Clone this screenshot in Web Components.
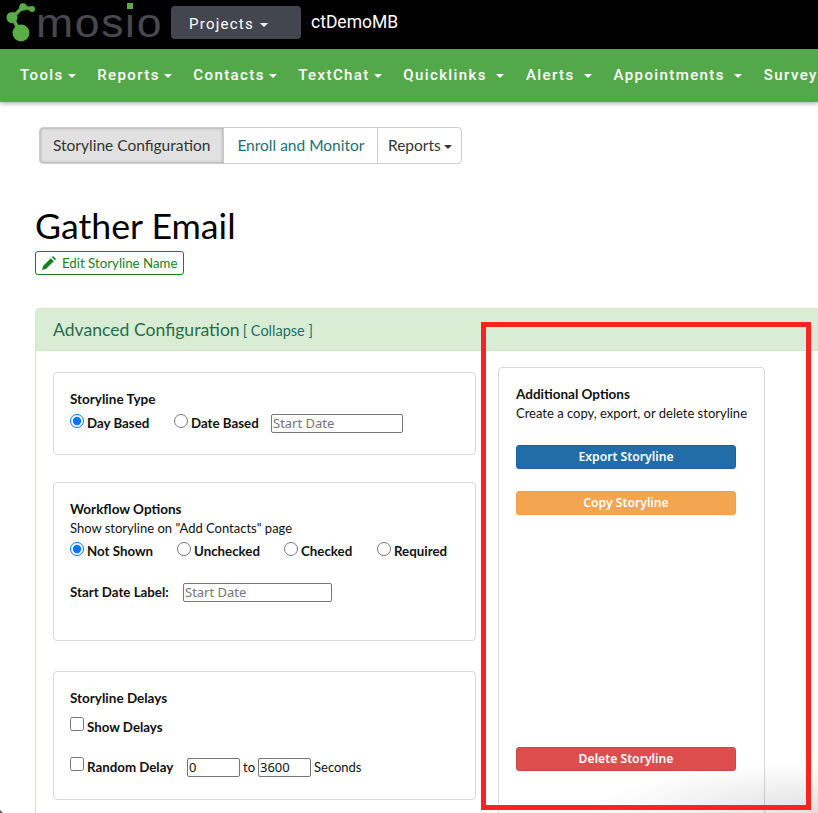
<!DOCTYPE html>
<html lang="en">
<head>
<meta charset="utf-8">
<title>Gather Email</title>
<style>
	html, body {
		margin: 0;
		height: 813px;
		overflow: hidden;
		background: #fff;
		color: #111;
		font-family: Lato, "Liberation Sans", sans-serif;
	}
	main-page { position: relative; }
	.left { display: flex; flex-direction: column; }
	.left option-card { padding-left: 16px; }
	.card-type { height: 83px; margin: 5px 0 27px; }
	.card-workflow { height: 159px; margin-bottom: 30px; }
	.card-delays { height: 129px; }
	.card-options { height: 460px; }
</style>
</head>
<body>
<main-page>
	<top-bar project="Projects" user="ctDemoMB"></top-bar>
	<nav-bar>
		<nav-item>Tools</nav-item>
		<nav-item>Reports</nav-item>
		<nav-item>Contacts</nav-item>
		<nav-item>TextChat</nav-item>
		<nav-item wide>Quicklinks</nav-item>
		<nav-item wide>Alerts</nav-item>
		<nav-item wide>Appointments</nav-item>
		<nav-item>Surveys</nav-item>
	</nav-bar>
	<tab-group></tab-group>
	<page-title name="Gather Email"></page-title>
	<config-panel>
		<div class="left" slot="left">
			<option-card class="card-type" heading="Storyline Type">
				<choice-row style="margin-top: 3px">
					<radio-choice name="type" width="104" checked>Day Based</radio-choice>
					<radio-choice name="type" width="97">Date Based</radio-choice>
					<text-field placeholder="Start Date" width="132"></text-field>
				</choice-row>
			</option-card>
			<option-card class="card-workflow" heading="Workflow Options" note='Show storyline on "Add Contacts" page'>
				<choice-row style="margin-top: 2px">
					<radio-choice name="flow" width="107" checked>Not Shown</radio-choice>
					<radio-choice name="flow" width="107">Unchecked</radio-choice>
					<radio-choice name="flow" width="93">Checked</radio-choice>
					<radio-choice name="flow">Required</radio-choice>
				</choice-row>
				<choice-row style="margin-top: 19px">
					<b style="width: 113px">Start Date Label:</b>
					<text-field placeholder="Start Date" width="149"></text-field>
				</choice-row>
			</option-card>
			<option-card class="card-delays" heading="Storyline Delays">
				<choice-row style="margin-top: 8px">
					<check-choice>Show Delays</check-choice>
				</choice-row>
				<choice-row style="margin-top: 18px">
					<check-choice width="117">Random Delay</check-choice>
					<text-field value="0" width="53"></text-field>
					<span style="margin: 0 3px">to</span>
					<text-field value="3600" width="53"></text-field>
					<span style="margin-left: 3px">Seconds</span>
				</choice-row>
			</option-card>
		</div>
		<option-card slot="right" class="card-options" heading="Additional Options" note="Create a copy, export, or delete storyline">
			<action-list>
				<action-button color="#226ca8" edge="#1f6198">Export Storyline</action-button>
				<action-button color="#f3a54f" edge="#eb9f4c" style="margin-top: 22px">Copy Storyline</action-button>
				<action-button color="#de4d4d" edge="#d64444" style="margin-top: 232px">Delete Storyline</action-button>
			</action-list>
		</option-card>
	</config-panel>
	<screen-marks></screen-marks>
</main-page>

<script>
(() => {
	/* 属性なしの単純な要素をまとめて定義する */
	const define = (tagName, html, init) => {
		customElements.define(tagName, class extends HTMLElement {
			constructor() {
				super();
				this.attachShadow({mode: 'open'}).innerHTML = html;
			}

			connectedCallback() {
				if (init !== undefined) {
					init(this, this.shadowRoot);
				}
			}
		});
	};

	define('main-page', `
		<style>:host { display: block; height: 813px; overflow: hidden; }</style>
		<slot></slot>
	`);

	define('top-bar', `
		<style>
			:host {
				display: flex;
				align-items: flex-start;
				height: 49px;
				background: #000;
				color: #fff;
			}
			.logo {
				position: relative;
				display: flex;
				width: 171px;
				height: 49px;
				flex: none;
			}
			.logo svg { position: absolute; left: 6px; top: 3px; }
			.word {
				position: absolute;
				left: 35.5px;
				top: 0;
				font: 400 40.5px/46px "Liberation Sans", sans-serif;
				letter-spacing: 1.5px;
				color: #47494e;
				transform: scaleX(1.1);
				transform-origin: 0 50%;
			}
			/* i の点だけ緑にする */
			.dot {
				position: absolute;
				left: 127px;
				top: 3px;
				width: 6px;
				height: 6px;
				border-bottom: 4px solid #000;
				background: #59ad47;
				background-clip: padding-box;
			}
			.project {
				display: flex;
				align-items: center;
				gap: 6px;
				box-sizing: border-box;
				width: 130px;
				height: 33px;
				margin-top: 6px;
				padding: 3px 0 0 18px;
				border-radius: 4px;
				background: #43464f;
				font: 400 15px Roboto, sans-serif;
				letter-spacing: 1.25px;
			}
			.caret {
				border-top: 4px solid #fff;
				border-left: 4px solid transparent;
				border-right: 4px solid transparent;
				margin-top: 2px;
			}
			.user {
				margin: 10px 0 0 10px;
				font: 400 17.5px/24px Roboto, sans-serif;
			}
		</style>
		<div class="logo">
			<svg width="32" height="40" viewBox="0 0 32 40" fill="#59ad47" stroke="#59ad47">
				<path d="M6 14.5 L17 4 L26 6 M6 14.5 L15 30" fill="none" stroke-width="3.5"/>
				<circle cx="15" cy="30" r="8.5" stroke="none"/>
				<circle cx="6" cy="14.5" r="5.5" stroke="none"/>
				<circle cx="17" cy="4" r="3.8" stroke="none"/>
				<circle cx="26" cy="6" r="3" stroke="none"/>
			</svg>
			<span class="word">mosio</span>
			<span class="dot"></span>
		</div>
		<div class="project"><span id="project"></span><span class="caret"></span></div>
		<div class="user" id="user"></div>
	`, (host, root) => {
		root.getElementById('project').textContent = host.getAttribute('project');
		root.getElementById('user').textContent = host.getAttribute('user');
	});

	define('nav-bar', `
		<style>
			:host {
				display: flex;
				align-items: center;
				gap: 21.5px;
				height: 53px;
				padding-left: 20px;
				background: #53a849;
				box-shadow: 0 2px 4px rgba(0, 0, 0, .28);
				overflow: hidden;
				white-space: nowrap;
			}
		</style>
		<slot></slot>
	`);

	define('nav-item', `
		<style>
			:host {
				display: inline-flex;
				flex: none;
				align-items: center;
				gap: 4px;
				color: #fff;
				font: 500 15px Roboto, sans-serif;
				letter-spacing: 1.4px;
				margin-top: -2px;
			}
			:host([wide]) { gap: 9.5px; }
			.caret {
				border-top: 4px solid #fff;
				border-left: 4px solid transparent;
				border-right: 4px solid transparent;
				margin-top: 2px;
			}
		</style>
		<slot></slot><span class="caret"></span>
	`);

	define('tab-group', `
		<style>
			:host {
				display: flex;
				width: max-content;
				height: 37px;
				box-sizing: border-box;
				margin: 25px 0 0 39px;
				border: 1px solid #ccc;
				border-radius: 4px;
				font: 400 15.5px Lato, sans-serif;
				color: #333;
			}
			div {
				display: flex;
				align-items: center;
				padding: 0 13px 2px;
				border-left: 1px solid #ccc;
			}
			.active {
				border-left: 0;
				border-radius: 3px 0 0 3px;
				background: #e1e1e1;
				box-shadow: inset 0 0 3px rgba(0, 0, 0, .35);
			}
			.link { color: #1c7072; padding: 0 12.5px 2px 13px; }
			.menu { padding: 0 9px 2px 10px; }
			.caret {
				display: inline-block;
				margin: 4px 0 0 3px;
				border-top: 4px solid #333;
				border-left: 4px solid transparent;
				border-right: 4px solid transparent;
			}
		</style>
		<div class="active">Storyline Configuration</div>
		<div class="link">Enroll and Monitor</div>
		<div class="menu">Reports<span class="caret"></span></div>
	`);

	define('page-title', `
		<style>
			:host { display: block; margin: 40px 0 0 35px; }
			h1 {
				margin: 0;
				font: 400 35.7px/44px Lato, sans-serif;
				color: #000;
			}
			.edit {
				display: inline-flex;
				align-items: center;
				gap: 6px;
				box-sizing: border-box;
				height: 24px;
				margin-top: 3px;
				padding: 0 6px 0 6px;
				border: 1px solid #17801f;
				border-radius: 3px;
				font: 400 13.25px Lato, sans-serif;
				color: #17801f;
				vertical-align: top;
			}
		</style>
		<h1 id="name"></h1>
		<div class="edit">
			<svg width="14" height="14" viewBox="0 0 14 14" fill="#17801f">
				<path d="M0 14 L1 10 L8.8 2.2 L11.8 5.2 L4 13 Z"/>
				<path d="M9.8 1.2 L11 0 L14 3 L12.8 4.2 Z"/>
			</svg>
			<span>Edit Storyline Name</span>
		</div>
	`, (host, root) => {
		root.getElementById('name').textContent = host.getAttribute('name');
	});

	define('config-panel', `
		<style>
			:host {
				display: block;
				box-sizing: border-box;
				width: 820px;
				height: 560px;
				margin: 33px 0 0 35px;
				border: 1px solid #d6e9c6;
				border-radius: 4px 0 0 0;
			}
			header {
				display: flex;
				align-items: baseline;
				gap: 3px;
				box-sizing: border-box;
				height: 42px;
				padding: 10px 17px 0;
				background: #d9edd5;
				border-bottom: 1px solid #cfe5c6;
				font: 400 17.6px Lato, sans-serif;
				color: #2c6b4a;
			}
			header span { font-size: 14.5px; color: #1c7072; }
			.body {
				display: grid;
				grid-template-columns: 423px 267px;
				column-gap: 22px;
				padding: 16px 0 0 17px;
			}
		</style>
		<header>Advanced Configuration <span>[ Collapse ]</span></header>
		<div class="body">
			<slot name="left"></slot>
			<slot name="right"></slot>
		</div>
	`);

	define('option-card', `
		<style>
			:host {
				display: block;
				box-sizing: border-box;
				padding: 17px 17px;
				border: 1px solid #d8d8d8;
				border-radius: 4px;
				font: 400 13px/19px Lato, sans-serif;
				color: #111;
			}
			.heading { font-weight: 700; font-size: 13.5px; }
		</style>
		<div class="heading" id="heading"></div>
		<div id="note"></div>
		<slot></slot>
	`, (host, root) => {
		root.getElementById('heading').textContent = host.getAttribute('heading');
		const note = host.getAttribute('note');
		if (note !== null) {
			root.getElementById('note').textContent = note;
		} else {
			root.getElementById('note').remove();
		}
	});

	define('choice-row', `
		<style>
			:host {
				display: flex;
				align-items: center;
				height: 22px;
			}
			::slotted(b) { font-weight: 700; font-size: 13.3px; }
		</style>
		<slot></slot>
	`);

	const choiceStyle = `
		<style>
			:host {
				display: inline-flex;
				flex: none;
				align-items: center;
				gap: 3px;
				font-weight: 700;
				font-size: 13.3px;
			}
			input { margin: 0; width: 14px; height: 14px; position: relative; top: -2px; }
			input[type="checkbox"] { top: -3px; }
		</style>
	`;

	define('radio-choice', `${choiceStyle}<input type="radio"><slot></slot>`, (host, root) => {
		const input = root.querySelector('input');
		input.name = host.getAttribute('name');
		input.checked = host.hasAttribute('checked');
		if (host.hasAttribute('width')) {
			host.style.width = `${host.getAttribute('width')}px`;
		}
	});

	define('check-choice', `${choiceStyle}<input type="checkbox"><slot></slot>`, (host) => {
		if (host.hasAttribute('width')) {
			host.style.width = `${host.getAttribute('width')}px`;
		}
	});

	define('text-field', `
		<style>
			:host { display: inline-flex; flex: none; }
			input {
				box-sizing: border-box;
				width: 100%;
				height: 19px;
				margin: 0;
				padding: 0 1px;
				border: 1px solid #767676;
				border-radius: 2px;
				font: 400 13px "Noto Sans", sans-serif;
				color: #111;
				background: #fff;
			}
			input::placeholder { color: #757575; }
		</style>
		<input type="text">
	`, (host, root) => {
		const input = root.querySelector('input');
		input.placeholder = host.getAttribute('placeholder') ?? '';
		input.value = host.getAttribute('value') ?? '';
		host.style.width = `${host.getAttribute('width')}px`;
	});

	define('action-list', `
		<style>:host { display: block; margin-top: 22px; width: 220px; }</style>
		<slot></slot>
	`);

	define('action-button', `
		<style>
			:host {
				display: flex;
				align-items: center;
				justify-content: center;
				box-sizing: border-box;
				height: 24px;
				padding-bottom: 1px;
				border: 1px solid var(--edge);
				border-radius: 3px;
				background: var(--fill);
				color: #fff;
				font: 600 12.2px "Noto Sans", sans-serif;
			}
		</style>
		<slot></slot>
	`, (host) => {
		host.style.setProperty('--fill', host.getAttribute('color'));
		host.style.setProperty('--edge', host.getAttribute('edge'));
	});

	/* 参照画像に載っている赤枠と右下の影 */
	define('screen-marks', `
		<style>
			:host { display: contents; }
			.frame {
				position: absolute;
				left: 481px;
				top: 322px;
				box-sizing: border-box;
				width: 330px;
				height: 488px;
				border: 5px solid #fb2320;
			}
			.fade {
				position: absolute;
				right: 0;
				bottom: 0;
				width: 220px;
				height: 50px;
				background: radial-gradient(ellipse at 100% 100%, rgba(0, 0, 0, .12), rgba(0, 0, 0, 0) 72%);
			}
			.corner {
				position: absolute;
				left: 0;
				bottom: 0;
				width: 3px;
				height: 3px;
				background: #555;
				clip-path: polygon(0 0, 100% 100%, 0 100%);
			}
		</style>
		<div class="fade"></div>
		<div class="frame"></div>
		<div class="corner"></div>
	`);
})();
</script>
</body>
</html>
